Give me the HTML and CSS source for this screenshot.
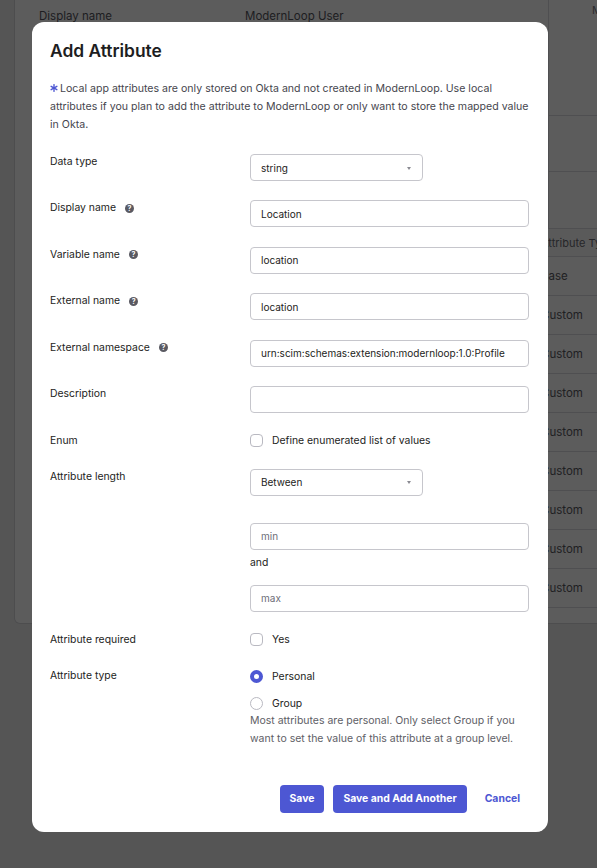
FILE: index.html
```html
<!DOCTYPE html>
<html lang="en">
<head>
<meta charset="utf-8">
<title>Add Attribute</title>
<link rel="stylesheet" href="styles.css">
</head>
<body>
  <!-- Profile editor page behind the dialog -->
  <main class="page">
    <section class="card">
      <div class="card-top">
        <div class="props">
          <div class="prop-row">
            <span class="prop-key">Display name</span>
            <span class="prop-val">ModernLoop User</span>
          </div>
        </div>
        <div class="side">
          <div class="side-head">Mapped</div>
          <div class="side-block"></div>
          <div class="side-block"></div>
        </div>
      </div>
      <div class="attr-table">
        <div class="t-row t-head"><span></span><span></span><span></span><span>Attribute Type</span></div>
        <div class="t-row"><span></span><span></span><span></span><span>Base</span></div>
        <div class="t-row"><span></span><span></span><span></span><span>Custom</span></div>
        <div class="t-row"><span></span><span></span><span></span><span>Custom</span></div>
        <div class="t-row"><span></span><span></span><span></span><span>Custom</span></div>
        <div class="t-row"><span></span><span></span><span></span><span>Custom</span></div>
        <div class="t-row"><span></span><span></span><span></span><span>Custom</span></div>
        <div class="t-row"><span></span><span></span><span></span><span>Custom</span></div>
        <div class="t-row"><span></span><span></span><span></span><span>Custom</span></div>
        <div class="t-row"><span></span><span></span><span></span><span>Custom</span></div>
      </div>
    </section>
  </main>

  <div class="backdrop"></div>

  <div class="modal" role="dialog" aria-labelledby="dlg-title">
    <h1 class="modal-title" id="dlg-title">Add Attribute</h1>
    <p class="notice">
      <svg class="notice-star" viewBox="0 0 10 10" width="8" height="8" aria-hidden="true">
        <g stroke="#4d57d3" stroke-width="1.7" stroke-linecap="round">
          <line x1="5" y1="0.8" x2="5" y2="9.2"/>
          <line x1="1.4" y1="2.9" x2="8.6" y2="7.1"/>
          <line x1="1.4" y1="7.1" x2="8.6" y2="2.9"/>
        </g>
      </svg>Local app attributes are only stored on Okta and not created in ModernLoop. Use local attributes if you plan to add the attribute to ModernLoop or only want to store the mapped value in Okta.
    </p>

    <form class="form">
      <div class="row">
        <label class="label">Data type</label>
        <div class="select"><span>string</span><i class="caret"></i></div>
      </div>
      <div class="row">
        <label class="label">Display name <span class="help">?</span></label>
        <input class="field" type="text" value="Location">
      </div>
      <div class="row">
        <label class="label">Variable name <span class="help">?</span></label>
        <input class="field" type="text" value="location">
      </div>
      <div class="row">
        <label class="label">External name <span class="help">?</span></label>
        <input class="field" type="text" value="location">
      </div>
      <div class="row">
        <label class="label">External namespace <span class="help">?</span></label>
        <input class="field" type="text" value="urn:scim:schemas:extension:modernloop:1.0:Profile">
      </div>
      <div class="row">
        <label class="label">Description</label>
        <input class="field" type="text" value="">
      </div>
      <div class="row row-inline">
        <label class="label">Enum</label>
        <div class="choice"><span class="box"></span>Define enumerated list of values</div>
      </div>
      <div class="row">
        <label class="label">Attribute length</label>
        <div class="length">
          <div class="select"><span>Between</span><i class="caret"></i></div>
          <input class="field field-min" type="text" placeholder="min">
          <span class="and">and</span>
          <input class="field" type="text" placeholder="max">
        </div>
      </div>
      <div class="row row-inline">
        <label class="label">Attribute required</label>
        <div class="choice"><span class="box"></span>Yes</div>
      </div>
      <div class="row">
        <label class="label label-choice">Attribute type</label>
        <div class="radios">
          <div class="choice"><span class="radio radio-on"></span>Personal</div>
          <div class="choice"><span class="radio"></span>Group</div>
          <p class="hint">Most attributes are personal. Only select Group if you want to set the value of this attribute at a group level.</p>
        </div>
      </div>
    </form>

    <div class="actions">
      <button class="btn btn-primary" type="button">Save</button>
      <button class="btn btn-primary" type="button">Save and Add Another</button>
      <button class="btn btn-link" type="button">Cancel</button>
    </div>
  </div>
</body>
</html>
```

FILE: styles.css
```css
* { box-sizing: border-box; }

html, body {
  margin: 0;
  height: 100%;
}

body {
  background: #ececec;
  font-family: Inter, "Noto Sans", "Liberation Sans", sans-serif;
  color: #1d1d21;
  overflow: hidden;
}

/* ---------- page behind the dialog ---------- */
.page {
  padding-left: 14px;
}

.card {
  width: 700px;
  height: 624px;
  background: #fff;
  border: 1px solid #d4d4d8;
  border-top: none;
  border-radius: 0 0 6px 6px;
  display: flex;
  flex-direction: column;
}

.card-top {
  display: flex;
  height: 228px;
}

.props {
  width: 533px;
  padding: 8px 0 0 24px;
}

.prop-row {
  display: grid;
  grid-template-columns: 206px 1fr;
  font-size: 11.5px;
  line-height: 16px;
  color: #55555d;
}

.side {
  flex: 1;
  border-left: 1px solid #dcdcdf;
  display: flex;
  flex-direction: column;
}

.side-head {
  height: 121px;
  padding: 3px 0 0 43px;
  font-size: 11px;
  color: #77777f;
  border-bottom: 1px solid #dcdcdf;
}

.side-block {
  height: 58px;
  border-bottom: 1px solid #dcdcdf;
}

.side-block:last-child {
  border-bottom: none;
}

.attr-table {
  padding-left: 24px;
}

.t-row {
  display: grid;
  grid-template-columns: 180px 180px 142px 1fr;
  height: 39px;
  align-items: center;
  border-bottom: 1px solid #dcdcdf;
  font-size: 11.5px;
  color: #5a5a62;
}

.t-head {
  height: 29px;
  font-size: 11px;
  color: #6a6a72;
  background: #fafafa;
  border-top: 1px solid #dcdcdf;
}

/* ---------- dialog ---------- */
.backdrop {
  position: fixed;
  inset: 0;
  background: rgba(0, 0, 0, 0.64);
}

.modal {
  position: absolute;
  left: 32px;
  top: 22px;
  width: 516px;
  background: #fff;
  border-radius: 12px;
  padding: 17px 19px 19px 18px;
}

.modal-title {
  margin: 0;
  font-size: 17.4px;
  line-height: 24px;
  font-weight: 600;
  color: #1d1d21;
}

.notice {
  margin: 17px 0 20px;
  font-size: 10.6px;
  line-height: 18px;
  color: #46464e;
}

.notice-star {
  margin-right: 2px;
  vertical-align: 0;
}

.form {
  display: flex;
  flex-direction: column;
  gap: 19.4px;
}

.row {
  display: grid;
  grid-template-columns: 200px 1fr;
  align-items: start;
}

.row-inline {
  align-items: center;
}

.label {
  display: flex;
  align-items: center;
  gap: 9px;
  font-size: 10.4px;
  line-height: 14px;
  padding-top: 1px;
  color: #1d1d21;
}

.row-inline .label {
  padding-top: 0;
}

.label-choice {
  padding-top: 1.5px;
}

.help {
  width: 9px;
  height: 9px;
  border-radius: 50%;
  background: #5a5a62;
  color: #fff;
  font-size: 7px;
  line-height: 9px;
  font-weight: 700;
  text-align: center;
}

.field {
  display: block;
  width: 100%;
  height: 27px;
  margin: 0;
  border: 1px solid #c6c6cc;
  border-radius: 4px;
  padding: 0 10px;
  font-family: inherit;
  font-size: 10px;
  color: #1d1d21;
  background: #fff;
  outline: none;
}

.field::placeholder {
  color: #6e6e78;
}

.select {
  width: 173px;
  height: 27px;
  border: 1px solid #c6c6cc;
  border-radius: 4px;
  padding: 0 10px;
  display: flex;
  align-items: center;
  justify-content: space-between;
  font-size: 10px;
  color: #1d1d21;
}

.caret {
  width: 0;
  height: 0;
  border-left: 2.5px solid transparent;
  border-right: 2.5px solid transparent;
  border-top: 3px solid #8a8a92;
  margin-right: 1px;
  margin-top: 1px;
}

.length {
  display: flex;
  flex-direction: column;
}

.field-min {
  margin-top: 27px;
}

.and {
  font-size: 10.4px;
  line-height: 14px;
  margin: 6px 0 15px;
}

.choice {
  display: flex;
  align-items: center;
  gap: 9px;
  height: 17px;
  font-size: 10.4px;
  color: #1d1d21;
}

.box {
  width: 13px;
  height: 13px;
  border: 1px solid #b9b9c1;
  border-radius: 4px;
  background: #fff;
}

.radios {
  display: flex;
  flex-direction: column;
  gap: 10px;
}

.radio {
  width: 13px;
  height: 13px;
  border-radius: 50%;
  border: 1px solid #b9b9c1;
  background: #fff;
}

.radio-on {
  border: 4px solid #4d57d3;
  background: #fff;
}

.hint {
  margin: -10px 0 0;
  font-size: 10.5px;
  line-height: 18px;
  color: #5e5e66;
}

.actions {
  display: flex;
  justify-content: flex-end;
  gap: 9px;
  margin-top: 37px;
}

.btn {
  height: 28px;
  border: none;
  border-radius: 4px;
  padding: 0 10px;
  font-family: inherit;
  font-size: 10.4px;
  font-weight: 700;
  cursor: pointer;
}

.btn-primary {
  background: #4d57d3;
  color: #fff;
}

.btn-link {
  background: transparent;
  color: #4d57d3;
  padding: 0 9px;
}
```
